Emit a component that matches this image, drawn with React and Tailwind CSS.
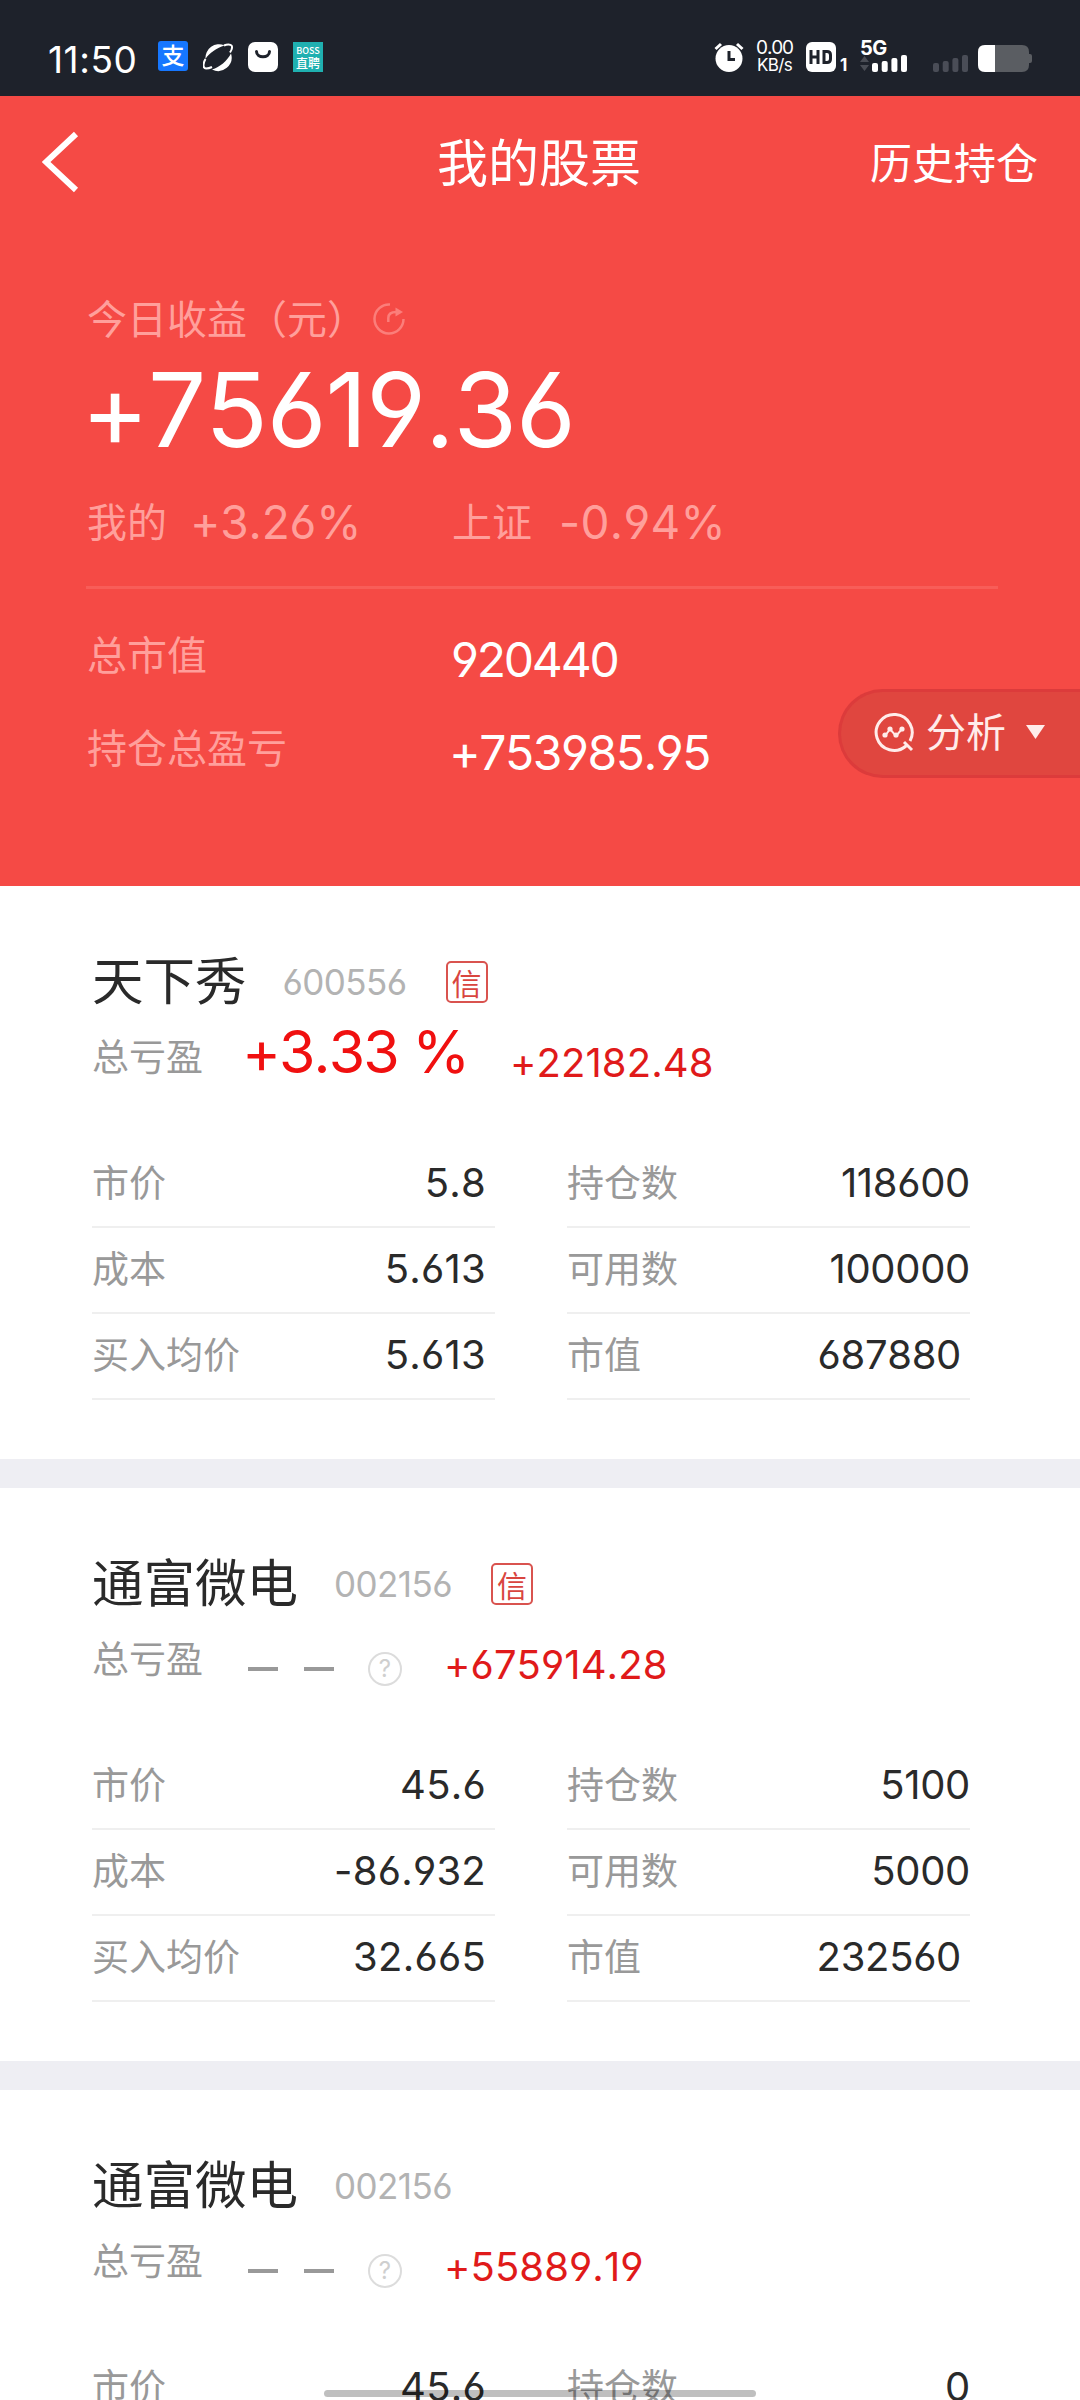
import clsx from "clsx";

const stocks = [
    {
        name: '天下秀',
        code: '600556',
        margin: true,
        percent: '+3.33 %',
        profit: '+22182.48',
        left: [['市价', '5.8'], ['成本', '5.613'], ['买入均价', '5.613']],
        right: [['持仓数', '118600'], ['可用数', '100000'], ['市值', '687880']]
    },
    {
        name: '通富微电',
        code: '002156',
        margin: true,
        percent: null,
        profit: '+675914.28',
        left: [['市价', '45.6'], ['成本', '-86.932'], ['买入均价', '32.665']],
        right: [['持仓数', '5100'], ['可用数', '5000'], ['市值', '232560']]
    },
    {
        name: '通富微电',
        code: '002156',
        margin: false,
        percent: null,
        profit: '+55889.19',
        left: [['市价', '45.6']],
        right: [['持仓数', '0']]
    }
];

const Num = ({ className, children }) => (
    <span className={clsx("font-['Inter',sans-serif] [font-feature-settings:'cv03','cv04','calt'_0] [font-kerning:none] whitespace-pre", className)}>
        {children}
    </span>
)

const StatusBar = () => (
    <div className="flex h-24 bg-[#1e222b] pl-12 text-white">
        <Num className="mt-[37px] w-[110px] text-[37px] leading-[45px] tracking-[0.015em]">11:50</Num>

        <div className="mt-[41px] flex h-[31px] gap-[15px]">
            <div className="flex size-[30px] items-center justify-center rounded-[3px] bg-[#1677ff] pb-1 text-[23px] leading-none font-medium">支</div>
            <svg className="mt-px size-[30px]" viewBox="0 0 30 30">
                <path d="M2.500 17A13.500 13.500 0 0 1 21.500 3.500C14 6 6 11 2.500 17z" fill="#fff" />
                <path d="M28 11.500A13.500 13.500 0 0 1 9 27.500C17 25 24 19 28 11.500z" fill="#fff" />
                <path d="M2.500 17C-.5 22 0 26.500 3 26.500c2 0 4-.5 6-1.500M21 3.500c3-1.500 6.500-1.500 7.500 0s.5 4-1.500 7" fill="none" stroke="#fff" strokeWidth="2" />
            </svg>
            <svg className="mt-px size-[30px]" viewBox="0 0 30 30">
                <rect width="30" height="30" rx="7" fill="#fff" />
                <path d="M8.500 9.500c0 7 13 7 13 0" fill="none" stroke="#1e222b" strokeWidth="3" strokeLinecap="round" />
            </svg>
            <div className="mt-px flex size-[30px] flex-col items-center bg-[#1fb0b0] pt-[3px] font-medium">
                <span className="text-[9px] leading-[11px]">BOSS</span>
                <span className="text-[12px] leading-[13px]">直聘</span>
            </div>
        </div>

        <div className="ml-auto flex h-[73px] items-end pr-12">
            <svg className="mb-px h-[30px] w-[30px]" viewBox="0 0 30 30">
                <circle cx="15" cy="16.500" r="13.500" fill="#fff" />
                <path d="M1.500 7L7 2M28.500 7L23 2" stroke="#fff" strokeWidth="3" />
                <path d="M15 9v8.500h6" fill="none" stroke="#1e222b" strokeWidth="3" />
            </svg>
            <div className="mr-[2px] ml-[10px] flex w-[41px] flex-col items-center">
                <Num className="text-[19px] leading-[18px] tracking-[-0.06em]">0.00</Num>
                <Num className="text-[17px] leading-[16px] tracking-[-0.04em]">KB/s</Num>
            </div>
            <svg className="mb-px ml-[9px] h-[30px] w-[30px]" viewBox="0 0 30 30">
                <rect width="30" height="30" rx="6" fill="#fff" />
                <path d="M5 8v14M12 8v14M5 15h7M18 9.500h3q3.500 0 3.500 3.500v4q0 3.500-3.500 3.500h-3z" fill="none" stroke="#1e222b" strokeWidth="3" />
            </svg>
            <Num className="ml-[4px] w-[10px] text-[17px] leading-[15px] font-bold">1</Num>
            <div className="mb-px ml-[10px] flex h-[32px] w-[48px] flex-col">
                <Num className="mt-px h-[14px] text-[20px] leading-[15px] font-bold tracking-[-0.03em]">5G</Num>
                <svg className="h-[17px] w-[48px]" viewBox="0 0 48 17">
                    <path d="M0 7l4.500-6L9 7zM0 10l4.500 6L9 10z" fill="#4a4d55" />
                    <g fill="#fff">
                        <rect x="12" y="8" width="6" height="9" rx="2" />
                        <rect x="21.700" y="6" width="6" height="11" rx="2" />
                        <rect x="31.400" y="3" width="6" height="14" rx="2" />
                        <rect x="41" y="0" width="6" height="17" rx="2" />
                    </g>
                </svg>
            </div>
            <svg className="mb-px ml-[25px] h-[17px] w-[36px]" viewBox="0 0 36 17" fill="#4a4d57">
                <rect x="0" y="8" width="6" height="9" rx="2" />
                <rect x="9.700" y="6" width="6" height="11" rx="2" />
                <rect x="19.400" y="3" width="6" height="14" rx="2" />
                <rect x="29" y="0" width="6" height="17" rx="2" />
            </svg>
            <svg className="mb-px ml-[9px] h-[27px] w-[54px]" viewBox="0 0 54 27">
                <path d="M7 0h37q7 0 7 7v2h1q2 0 2 2v5q0 2-2 2h-1v2q0 7-7 7H7q-7 0-7-7V7q0-7 7-7z" fill="#5a5d62" />
                <path d="M17 0v27H7q-7 0-7-7V7q0-7 7-7z" fill="#fff" />
            </svg>
        </div>
    </div>
)

const Summary = () => (
    <div className="relative h-[790px] bg-[#f54a45] text-white">
        <div className="flex h-[132px] items-center justify-between pr-[42px] pl-[42px]">
            <svg className="h-[62px] w-[166px]" viewBox="0 0 166 62">
                <path d="M34 3L4 31l30 28" fill="none" stroke="#fff" strokeWidth="6" />
            </svg>
            <div className="pb-[3px] text-[51px] leading-none">我的股票</div>
            <div className="pb-[3px] text-[42px] leading-none">历史持仓</div>
        </div>

        <div className="px-[87px] text-[#ff9f9b]">
            <div className="mt-[59px] flex h-[60px] items-center text-[40px]">
                今日收益（元）
                <svg className="mt-[3px] ml-[6px] size-[32px]" viewBox="0 0 32 32" fill="none" stroke="#fb7e7a" strokeWidth="2.500">
                    <path d="M17 1.500A14.500 14.500 0 1 0 30.500 16" />
                    <path d="M15.300 19v-4c0-4 3-6 8-6" />
                    <path d="M22.500 4.500L30 9l-7.500 4.500z" fill="#fb7e7a" stroke="none" />
                </svg>
            </div>
            <Num className="-ml-[6px] block h-[124px] text-[103px] leading-[125px] tracking-[-0.011em] text-white">+75619.36</Num>
            <div className="mt-[21px] flex h-[60px] items-center text-[40px]">
                <span className="-mt-1 w-[103px]">我的</span>
                <Num className="w-[262px] text-[46px] tracking-[-0.003em]">+3.26%</Num>
                <span className="-mt-1 w-[107px]">上证</span>
                <Num className="text-[46px] tracking-[0.007em]">-0.94%</Num>
            </div>
            <div className="mt-[34px] -ml-px h-[3px] w-[912px] bg-[#f85d58]"></div>
            <div className="mt-[36px] flex h-[60px] text-[40px] leading-[60px]">
                <span className="-mt-[2px] w-[364px]">总市值</span>
                <Num className="mt-[5px] text-[48px] tracking-[-0.046em] text-white">920440</Num>
            </div>
            <div className="mt-[33px] flex h-[60px] text-[40px] leading-[60px]">
                <span className="-mt-[2px] w-[362px]">持仓总盈亏</span>
                <Num className="mt-[5px] text-[48px] tracking-[-0.03em] text-white">+753985.95</Num>
            </div>
        </div>

        {/* floating button stuck to the right edge */}
        <div className="absolute top-[593px] right-0 flex h-[89px] w-[242px] items-center rounded-l-full border-3 border-r-0 border-[#dc3b3b] bg-[#e0463f] pl-[32px]">
            <svg className="mb-[3px] size-[42px]" viewBox="0 0 42 42" fill="none" stroke="#ffecea" strokeWidth="3">
                <path d="M33 35A18 18 0 1 1 37 30M31 31l8 8" />
                <path d="M12 25l5-7 6 7 6-7" strokeWidth="2" />
                <g fill="#ffecea" stroke="none">
                    <circle cx="12" cy="24" r="2.600" />
                    <circle cx="17" cy="18" r="2.600" />
                    <circle cx="23" cy="24" r="2.600" />
                    <circle cx="29" cy="18" r="2.600" />
                </g>
            </svg>
            <span className="ml-[11px] pb-[7px] text-[40px] leading-none text-[#ffecea]">分析</span>
            <svg className="mb-[4px] ml-[20px] h-[14px] w-[19px] shrink-0" viewBox="0 0 19 14">
                <path d="M0 0h19l-9.500 14z" fill="#ffecea" />
            </svg>
        </div>
    </div>
)

const Rows = ({ rows, lastPad }) => (
    <div className="w-[403px]">
        {
            rows.map(([label, value], index) => (
                <div key={index} className="flex h-[86px] justify-between border-b-2 border-[#efefef]">
                    <span className="text-[37px] leading-[79px] text-[#999]">{label}</span>
                    <Num
                        className={clsx(
                            "text-[40px] leading-[81px] text-[#2a2a2a]",
                            value.includes('.') ? "tracking-[0.006em]" : "tracking-[-0.008em]",
                            (!lastPad || index === 2) && "pr-[9px]"
                        )}
                    >
                        {value}
                    </Num>
                </div>
            ))
        }
    </div>
)

const StockCard = ({ stock }) => (
    <div className="h-[602px] border-b-[29px] border-[#eeeef3] bg-white px-[92px] pt-[66px]">
        <div className="flex h-[60px] items-center">
            <span className="pb-[8px] text-[51.500px] leading-none text-[#2a2a2a]">{stock.name}</span>
            <Num className="ml-[36px] text-[35px] tracking-[-0.016em] text-[#b3b3b3]">{stock.code}</Num>
            {
                stock.margin &&
                <span className="ml-[39px] flex size-[42px] items-center justify-center rounded-[5px] border-2 border-[#d9534f] text-[30px] leading-none text-[#d9453f]">信</span>
            }
        </div>
        <div className="flex h-[130px]">
            <span className="mt-[13px] w-[150px] text-[37px] leading-[60px] text-[#999]">总亏盈</span>
            {
                stock.percent
                    ? <Num className="mt-[10px] w-[268px] text-[59px] leading-[60px] tracking-[-0.033em] text-[#f01010]">{stock.percent}</Num>
                    : (
                        <div className="mt-[38px] flex h-[34px] w-[202px] items-center pl-[6px]">
                            <span className="h-1 w-[30px] bg-[#999]"></span>
                            <span className="ml-[26px] h-1 w-[30px] bg-[#999]"></span>
                            <Num className="ml-[34px] flex size-[34px] items-center justify-center rounded-full border-2 border-[#dcdcdc] text-[24px] text-[#cfcfcf]">?</Num>
                        </div>
                    )
            }
            <Num className="mt-[21px] text-[40px] leading-[60px] tracking-[0.002em] text-[#e01a1a]">{stock.profit}</Num>
        </div>
        <div className="flex gap-[72px]">
            <Rows rows={stock.left} />
            <Rows rows={stock.right} lastPad />
        </div>
    </div>
)

const App = () => {
    return (
        <div className="relative h-[2400px] w-[1080px] overflow-hidden bg-white font-['Noto_Sans_CJK_SC',sans-serif]">
            <StatusBar />
            <Summary />
            {
                stocks.map((stock, index) => (
                    <StockCard key={index} stock={stock} />
                ))
            }
            {/* system gesture bar */}
            <div className="absolute top-[2390px] left-[324px] h-[7px] w-[432px] rounded-full bg-black/25"></div>
        </div>
    )
}

export default App
